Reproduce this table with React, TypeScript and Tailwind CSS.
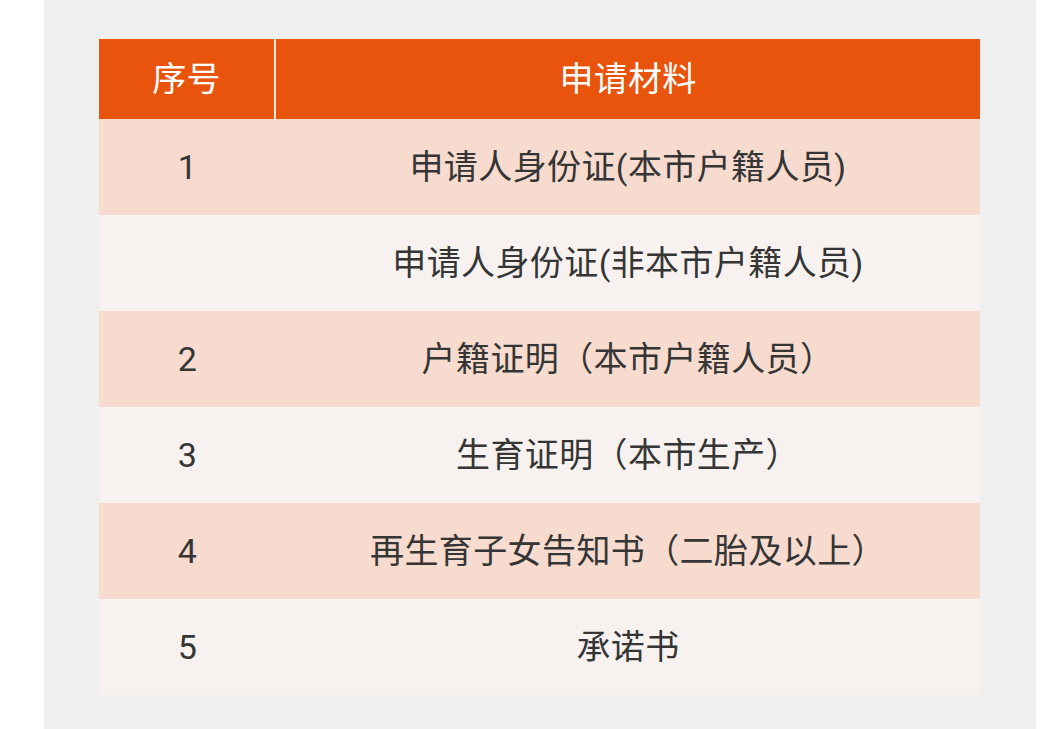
const rows: { no: string; name: string }[] = [
  { no: "1", name: "申请人身份证(本市户籍人员)" },
  { no: "", name: "申请人身份证(非本市户籍人员)" },
  { no: "2", name: "户籍证明（本市户籍人员）" },
  { no: "3", name: "生育证明（本市生产）" },
  { no: "4", name: "再生育子女告知书（二胎及以上）" },
  { no: "5", name: "承诺书" },
];

export default function App() {
  return (
    <div
      className="min-h-screen bg-white"
      style={{ fontFamily: "Roboto, 'Noto Sans CJK SC', sans-serif" }}
    >
      <div className="ml-[44px] min-h-screen w-[992px] bg-[#efefef] pl-[55px] pr-[56px] pt-[39px]">
        <div className="w-[881px]">
          {/* Header */}
          <div className="grid h-[80px] grid-cols-[177px_1fr] bg-[#e9540d] text-[34px] tracking-[0.3px] text-white">
            <div className="flex items-center justify-center border-r-2 border-[#fbe9df]">
              序号
            </div>
            <div className="flex items-center justify-center">申请材料</div>
          </div>

          {/* Rows */}
          {rows.map((row, i) => (
            <div
              key={i}
              className={
                "grid h-[96px] grid-cols-[177px_1fr] text-[34px] tracking-[0.4px] text-[#353535] " +
                (i % 2 === 0 ? "bg-[#f6dbce]" : "bg-[#f7f2ef]")
              }
            >
              <div className="flex items-center justify-center">{row.no}</div>
              <div className="flex items-center justify-center">{row.name}</div>
            </div>
          ))}
        </div>
      </div>
    </div>
  );
}
